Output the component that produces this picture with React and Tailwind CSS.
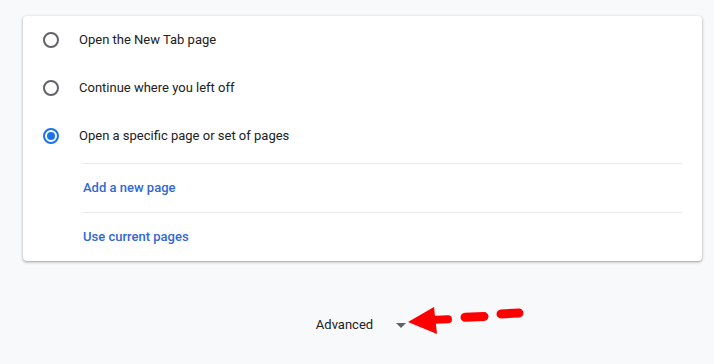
import React from "react";

const Radio = ({ checked }) =>
  checked ? (
    <span className="w-4 h-4 rounded-full border-2 border-[#1a73e8] flex items-center justify-center shrink-0">
      <span className="w-2 h-2 rounded-full bg-[#1a73e8]" />
    </span>
  ) : (
    <span className="w-4 h-4 rounded-full border-2 border-[#5f6368] shrink-0" />
  );

const options = [
  { label: "Open the New Tab page", checked: false },
  { label: "Continue where you left off", checked: false },
  { label: "Open a specific page or set of pages", checked: true },
];

const App = () => {
  return (
    <div
      className="relative w-[714px] h-[364px] bg-[#f8f9fa] pt-4 pl-[23px] pr-[12px] overflow-hidden"
      style={{ fontFamily: "Roboto, 'Liberation Sans', sans-serif" }}
    >
      <div className="bg-white rounded shadow-[0_1px_2px_rgba(60,64,67,0.3),0_1px_3px_1px_rgba(60,64,67,0.15)] px-5">
        {options.map((o) => (
          <div key={o.label} className="h-12 flex items-center gap-5">
            <Radio checked={o.checked} />
            <span className="text-[13px] text-[#202124]">{o.label}</span>
          </div>
        ))}
        <div className="h-[3px]" />
        <div className="ml-10">
          <div className="h-12 border-t border-[#e8eaed] flex items-center box-content">
            <span className="text-[13px] font-medium text-[#3367d6]">Add a new page</span>
          </div>
          <div className="h-12 border-t border-[#e8eaed] flex items-center box-content">
            <span className="text-[13px] font-medium text-[#3367d6]">Use current pages</span>
          </div>
        </div>
      </div>

      <div className="mt-[40px] h-12 flex items-center justify-center pr-[3px]">
        <span className="text-[13px] text-[#202124]">Advanced</span>
        <svg className="ml-[23px]" width="10" height="5" viewBox="0 0 10 5">
          <path d="M0 0 L10 0 L5 5 Z" fill="#5f6368" />
        </svg>
      </div>

      {/* annotation arrow */}
      <svg className="absolute left-[400px] top-[300px]" width="130" height="40" viewBox="0 0 130 40">
        <polygon points="8,22 34,7 37,34" fill="#ff0000" />
        <line x1="30" y1="20" x2="48" y2="19.3" stroke="#ff0000" strokeWidth="8" strokeLinecap="round" />
        <line x1="65" y1="17.3" x2="84" y2="16.5" stroke="#ff0000" strokeWidth="9" strokeLinecap="round" />
        <line x1="101" y1="14" x2="119" y2="13" stroke="#ff0000" strokeWidth="9" strokeLinecap="round" />
      </svg>
    </div>
  );
};

export default App;
